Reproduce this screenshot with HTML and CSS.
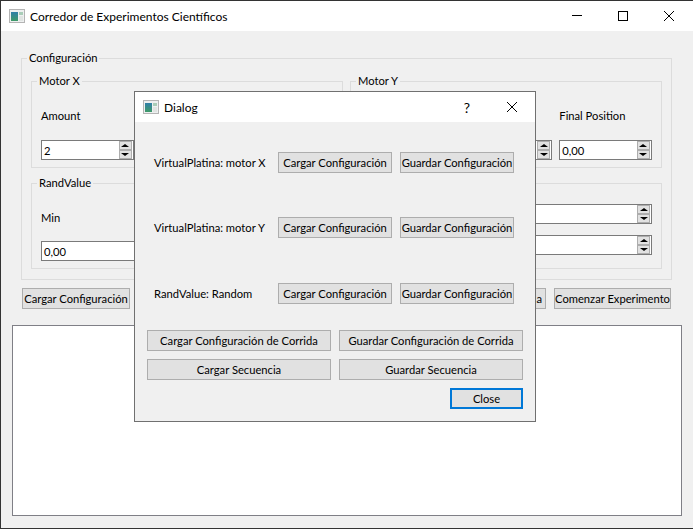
FILE: index.html
```html
<!DOCTYPE html>
<html lang="es">

<head>
    <meta charset="UTF-8" />
    <title>Corredor de Experimentos Científicos</title>
    <link rel="stylesheet" href="styles.css">
</head>

<body>
    <div class="window">
        <div class="titlebar">
            <svg class="app-icon" width="16" height="14" viewBox="0 0 16 14">
                <defs>
                    <linearGradient id="pane" x1="0" y1="0" x2="0" y2="1">
                        <stop offset="0" stop-color="#2f7fa8" />
                        <stop offset="1" stop-color="#3f9a68" />
                    </linearGradient>
                </defs>
                <rect x="0.5" y="0.5" width="15" height="13" fill="#eef0f0" stroke="#b4b4b4" />
                <rect x="2" y="3" width="7" height="9" fill="url(#pane)" />
                <rect x="10" y="3" width="4" height="3" fill="#a9cdb8" />
                <rect x="10" y="7" width="4" height="5" fill="#e0e4e2" />
            </svg>
            <span class="title">Corredor de Experimentos Científicos</span>
            <div class="win-buttons">
                <svg width="12" height="12" viewBox="0 0 12 12"><path d="M1 5.5H11" stroke="#000" fill="none" /></svg>
                <svg width="12" height="12" viewBox="0 0 12 12"><rect x="1.5" y="1.5" width="9" height="9" stroke="#000" fill="none" /></svg>
                <svg width="12" height="12" viewBox="0 0 12 12"><path d="M1 1L11 11M11 1L1 11" stroke="#000" fill="none" /></svg>
            </div>
        </div>

        <div class="central">
            <fieldset class="group config">
                <legend>Configuración</legend>
                <div class="config-grid">
                    <fieldset class="group">
                        <legend>Motor X</legend>
                        <div class="motor-fields">
                            <div class="field">
                                <label>Amount</label>
                                <div class="spin"><span class="spin-value">2</span><span class="spin-btns"><i class="up"></i><i class="down"></i></span></div>
                            </div>
                            <!-- estas columnas quedan tapadas por el dialogo -->
                            <div class="field">
                                <label></label>
                                <div class="spin"><span class="spin-value"></span><span class="spin-btns"><i class="up"></i><i class="down"></i></span></div>
                            </div>
                            <div class="field">
                                <label></label>
                                <div class="spin"><span class="spin-value"></span><span class="spin-btns"><i class="up"></i><i class="down"></i></span></div>
                            </div>
                        </div>
                    </fieldset>
                    <fieldset class="group">
                        <legend>Motor Y</legend>
                        <div class="motor-fields">
                            <div class="field">
                                <label></label>
                                <div class="spin"><span class="spin-value"></span><span class="spin-btns"><i class="up"></i><i class="down"></i></span></div>
                            </div>
                            <div class="field">
                                <label></label>
                                <div class="spin"><span class="spin-value"></span><span class="spin-btns"><i class="up"></i><i class="down"></i></span></div>
                            </div>
                            <div class="field">
                                <label>Final Position</label>
                                <div class="spin"><span class="spin-value">0,00</span><span class="spin-btns"><i class="up"></i><i class="down"></i></span></div>
                            </div>
                        </div>
                    </fieldset>
                    <fieldset class="group rand">
                        <legend>RandValue</legend>
                        <div class="rand-fields">
                            <div class="field">
                                <label>Min</label>
                                <div class="spin"><span class="spin-value">0,00</span><span class="spin-btns"><i class="up"></i><i class="down"></i></span></div>
                            </div>
                            <div class="rand-right">
                                <div class="spin"><span class="spin-value"></span><span class="spin-btns"><i class="up"></i><i class="down"></i></span></div>
                                <div class="spin"><span class="spin-value"></span><span class="spin-btns"><i class="up"></i><i class="down"></i></span></div>
                            </div>
                        </div>
                    </fieldset>
                </div>
            </fieldset>

            <div class="main-actions">
                <button>Cargar Configuración</button>
                <button></button>
                <button></button>
                <button class="end-text">a</button>
                <button>Comenzar Experimento</button>
            </div>

            <div class="log"></div>
        </div>
    </div>

    <div class="dialog">
        <div class="titlebar">
            <svg class="app-icon" width="16" height="14" viewBox="0 0 16 14">
                <rect x="0.5" y="0.5" width="15" height="13" fill="#eef0f0" stroke="#b4b4b4" />
                <rect x="2" y="3" width="7" height="9" fill="url(#pane)" />
                <rect x="10" y="3" width="4" height="3" fill="#a9cdb8" />
                <rect x="10" y="7" width="4" height="5" fill="#e0e4e2" />
            </svg>
            <span class="title">Dialog</span>
            <div class="dialog-buttons">
                <span class="help">?</span>
                <svg width="12" height="12" viewBox="0 0 12 12"><path d="M1 1L11 11M11 1L1 11" stroke="#000" fill="none" /></svg>
            </div>
        </div>
        <div class="dialog-body">
            <div class="device-rows">
                <span>VirtualPlatina: motor X</span>
                <button>Cargar Configuración</button>
                <button>Guardar Configuración</button>
                <span>VirtualPlatina: motor Y</span>
                <button>Cargar Configuración</button>
                <button>Guardar Configuración</button>
                <span>RandValue: Random</span>
                <button>Cargar Configuración</button>
                <button>Guardar Configuración</button>
            </div>
            <div class="wide-buttons">
                <button>Cargar Configuración de Corrida</button>
                <button>Guardar Configuración de Corrida</button>
                <button>Cargar Secuencia</button>
                <button>Guardar Secuencia</button>
            </div>
            <div class="dialog-footer">
                <button class="default">Close</button>
            </div>
        </div>
    </div>
</body>

</html>
```

FILE: styles.css
```css
* {
    box-sizing: border-box;
}

body {
    margin: 0;
    font-family: Lato, sans-serif;
    font-size: 11.2px;
    color: #000;
}

button {
    height: 21px;
    padding: 0;
    font: inherit;
    color: #000;
    white-space: nowrap;
    background-color: #e1e1e1;
    border: 1px solid #adadad;
}

button.default {
    border: 2px solid #0078d7;
}

button.end-text {
    padding-right: 3px;
    text-align: right;
}

.window {
    width: 693px;
    height: 529px;
    background-color: #f0f0f0;
    border-top: 1px solid #333;
    border-left: 1px solid #333;
    border-bottom: 1px solid #333;
}

.titlebar {
    display: flex;
    align-items: center;
    height: 30px;
    background-color: #fff;
}

.app-icon {
    margin-left: 8px;
    margin-right: 5px;
    flex-shrink: 0;
}

.title {
    font-size: 12px;
}

.win-buttons {
    display: flex;
    gap: 34px;
    margin-left: auto;
    margin-right: 18px;
}

.central {
    padding: 20px 11px 0;
}

.group {
    min-width: 0;
    margin: 0;
    padding: 8px 9px 7px;
    border: 1px solid #dcdcdc;
}

.group legend {
    height: 14px;
    margin-left: -4px;
    padding: 0 2px;
    line-height: 14px;
}

.config {
    margin: 0 10px 0 9px;
    padding: 9px 9px 10px;
}

.config-grid {
    display: grid;
    grid-template-columns: 1fr 1fr;
    gap: 8px 7px;
}

.rand {
    grid-column: 1 / 3;
}

.motor-fields {
    display: grid;
    grid-template-columns: repeat(3, 1fr);
    gap: 7px;
}

.rand-fields {
    display: grid;
    grid-template-columns: 1fr 1fr;
    gap: 7px;
    align-items: center;
}

.rand-right {
    display: flex;
    flex-direction: column;
    gap: 11px;
}

.field label {
    display: block;
    height: 40px;
    line-height: 40px;
    white-space: nowrap;
}

.rand .field label {
    margin-bottom: 3px;
}

.field .spin {
    margin-top: 4px;
}

.rand .field .spin {
    margin-top: 0;
}

.spin {
    display: flex;
    align-items: center;
    height: 20px;
    padding: 0 1px 0 2px;
    background-color: #fff;
    border: 1px solid #7a7a7a;
}

.spin-value {
    flex: 1;
}

.spin-btns {
    display: flex;
    flex-direction: column;
    width: 13px;
    height: 18px;
}

.spin-btns i {
    display: flex;
    flex: 1;
    align-items: center;
    justify-content: center;
    background-color: #e1e1e1;
    border: 1px solid #adadad;
}

.spin-btns i::before {
    content: "";
    border-left: 4px solid transparent;
    border-right: 4px solid transparent;
}

.spin-btns .up::before {
    border-bottom: 3px solid #000;
}

.spin-btns .down::before {
    border-top: 3px solid #000;
}

.main-actions {
    display: grid;
    grid-template-columns: 108px 115px 100px 177px 117px;
    gap: 8px;
    margin-top: 8px;
    padding-left: 10px;
}

.log {
    height: 191px;
    margin-top: 16px;
    background-color: #fff;
    border: 1px solid #7f7f86;
}

/* ventana flotante sobre la principal */
.dialog {
    position: absolute;
    left: 134px;
    top: 91px;
    width: 402px;
    height: 331px;
    background-color: #f0f0f0;
    border: 1px solid #707070;
}

.dialog-buttons {
    display: flex;
    align-items: center;
    gap: 36px;
    margin-left: auto;
    margin-right: 17px;
}

.help {
    font-size: 14px;
}

.dialog-body {
    padding: 30px 12px 0;
}

.device-rows {
    display: grid;
    grid-template-columns: 116px 114px 114px;
    grid-template-rows: 65px 66px 21px;
    column-gap: 8px;
    align-items: start;
    padding-left: 7px;
}

.device-rows span {
    line-height: 21px;
    white-space: nowrap;
}

.wide-buttons {
    display: grid;
    grid-template-columns: 184px 184px;
    gap: 8px;
    margin-top: 26px;
}

.dialog-footer {
    display: flex;
    justify-content: flex-end;
    width: 376px;
    margin-top: 8px;
}

.dialog-footer button {
    width: 73px;
}
```
